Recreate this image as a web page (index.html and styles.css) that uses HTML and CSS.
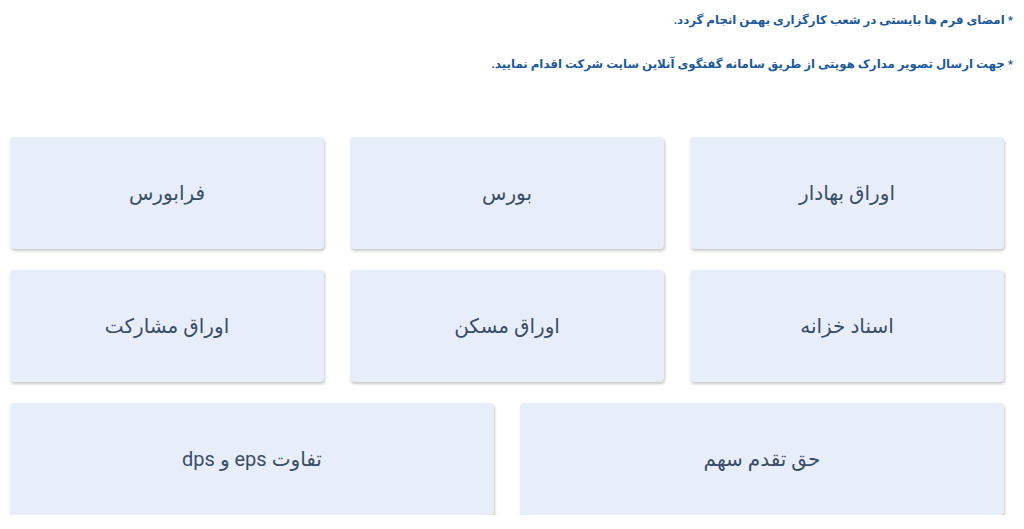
FILE: index.html
```html
<!DOCTYPE html>
<html lang="fa" dir="rtl">
<head>
    <meta charset="UTF-8">
    <meta name="viewport" content="width=device-width, initial-scale=1.0">
    <title>راهنمای معاملات</title>
    <link rel="stylesheet" href="styles.css">
</head>
<body>
    <div class="container">
        <section class="notes">
            <p>* امضای فرم ها بایستی در شعب کارگزاری بهمن انجام گردد.</p>
            <p>* جهت ارسال تصویر مدارک هویتی از طریق سامانه گفتگوی آنلاین سایت شرکت اقدام نمایید.</p>
        </section>

        <section class="markets">
            <div class="row row-3">
                <a class="card" href="#">اوراق بهادار</a>
                <a class="card" href="#">بورس</a>
                <a class="card" href="#">فرابورس</a>
            </div>
            <div class="row row-3">
                <a class="card" href="#">اسناد خزانه</a>
                <a class="card" href="#">اوراق مسکن</a>
                <a class="card" href="#">اوراق مشارکت</a>
            </div>
            <div class="row row-2">
                <a class="card" href="#">حق تقدم سهم</a>
                <a class="card" href="#">تفاوت eps و dps</a>
            </div>
        </section>
    </div>
</body>
</html>
```

FILE: styles.css
```css
:root {
    --note: #1d5a9c;
    --card-bg: #e8eef9;
    --card-text: #3a4d68;
}

* {
    box-sizing: border-box;
    margin: 0;
    padding: 0;
}

body {
    background: #fff;
    font-family: Roboto, "DejaVu Sans", sans-serif;
}

.container {
    padding: 0 11px 0 10px;
}

.notes {
    padding-top: 11px;
    height: 137px;
}

.notes p {
    color: var(--note);
    font-size: 11.8px;
    font-weight: bold;
    line-height: 18px;
    margin-bottom: 26px;
}

.markets {
    display: flex;
    flex-direction: column;
    gap: 21px;
    margin-right: 9px;
}

.row {
    display: grid;
    gap: 26px;
}

.row-3 {
    grid-template-columns: repeat(3, 1fr);
}

.row-2 {
    grid-template-columns: repeat(2, 1fr);
}

.card {
    display: flex;
    align-items: center;
    justify-content: center;
    height: 112px;
    background: var(--card-bg);
    color: var(--card-text);
    text-decoration: none;
    font-size: 20px;
    border-radius: 4px;
    box-shadow: 1px 2px 3px rgba(0, 0, 0, 0.22);
}
```
